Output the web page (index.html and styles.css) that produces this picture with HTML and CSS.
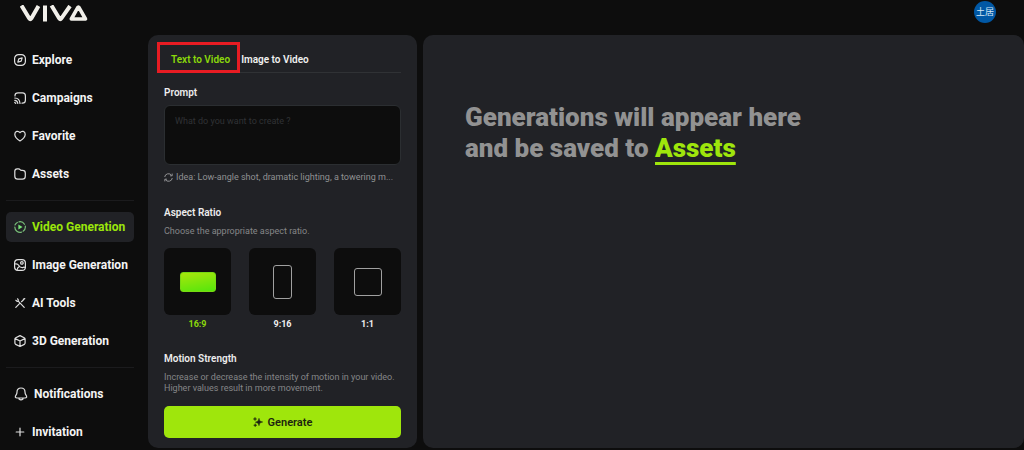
FILE: index.html
```html
<!DOCTYPE html>
<html lang="en">
<head>
<meta charset="utf-8">
<meta name="viewport" content="width=device-width, initial-scale=1">
<title>VIVA – Video Generation</title>
<link rel="stylesheet" href="styles.css">
</head>
<body>
<div class="app">
  <header class="topbar">
    <a class="logo" href="#" aria-label="VIVA">
      <svg width="68" height="17" viewBox="0 0 68 17" fill="none" stroke="#f1efe9" stroke-width="4" stroke-linejoin="round"><path d="M1.500 .5 9.300 13.500q1 1.500 2 0L18.500 1M25 .5v16M31.500 .5l7.800 13q1 1.500 2 0L50 1"/><path d="M57.600 2.800q.8-1.300 1.600 0L65.500 14H51.300Z" stroke-width="3.600"/></svg>
    </a>
    <button class="avatar" type="button">土居</button>
  </header>

  <nav class="sidebar" aria-label="Main">
    <a class="nav-item" href="#"><svg class="icon" viewBox="0 0 12 12"><rect x=".6" y=".6" width="10.800" height="10.800" rx="4"/><path d="m8.200 3.800-1 3.400-3.400 1 1-3.400Z"/></svg>Explore</a>
    <a class="nav-item" href="#"><svg class="icon" viewBox="0 0 12 12"><path d="M1 4V3.500Q1 .8 4 .8h4.500q2.900 0 2.900 2.900v4.500q0 3-3 3H8M.8 6q4.800.2 5.200 5.400M.8 8.300q2.600.2 3 3.100M.8 10.500l.9.900"/></svg>Campaigns</a>
    <a class="nav-item" href="#"><svg class="icon" viewBox="0 0 12 12"><path d="M6 11Q.8 7.800.8 4.200C.8 1.300 4.200.2 6 2.700 7.800.2 11.200 1.300 11.200 4.200Q11.200 7.800 6 11Z"/></svg>Favorite</a>
    <a class="nav-item" href="#"><svg class="icon" viewBox="0 0 12 12"><path d="M.8 3.300Q.8.8 3.200.8h1.300q1 0 1.600.9.500.7 1.400.7h1q2.800 0 2.800 2.600v3.300q0 2.900-2.900 2.900H3.700Q.8 11.200.8 8.300Z"/></svg>Assets</a>
    <hr class="divider">
    <a class="nav-item nav-item-active" href="#" aria-current="page"><svg class="icon" viewBox="0 0 12 12"><path d="M1 4A5.300 5.300 0 0 1 3.300 1.400M5 .8a5.300 5.300 0 0 1 5.500 2.500M11.300 5a5.300 5.300 0 0 1-2.200 5.200M7.500 11.100A5.300 5.300 0 0 1 .8 6"/><path class="solid" d="M4.400 3.500v5L8.500 6Z"/></svg>Video Generation</a>
    <a class="nav-item" href="#"><svg class="icon" viewBox="0 0 12 12"><rect x=".6" y=".6" width="10.800" height="10.800" rx="3.500"/><circle cx="7.900" cy="3.900" r="1.300"/><path d="M.8 5q2.600-.8 4 1.500T8.500 8.700q1.300-.9 2.800-.2M3 11Q3.400 8.600 5.300 7.500"/></svg>Image Generation</a>
    <a class="nav-item" href="#"><svg class="icon" viewBox="0 0 12 12"><path d="m4.200 4.200 6 6.200M1.800 10.400 6 6.200M7.500 4.700l2.800-2.600M1.900 3.300q1.200 1.300 2.300.9.600-1.200-.7-2.400M10.800 1.700l-1.300.3-.3 1.100"/></svg>AI Tools</a>
    <a class="nav-item" href="#"><svg class="icon" viewBox="0 0 12 12"><path d="m6 .6 4.200 2.100q.9.500.9 1.400v4q0 .9-.8 1.300L6 11.500 1.700 9.400Q.9 9 .9 8.100v-4q0-.9.900-1.400ZM1.200 3.600 6 6l4.800-2.400M6 6v5.300"/></svg>3D Generation</a>
    <hr class="divider">
    <a class="nav-item" href="#"><svg class="icon icon-large" viewBox="0 0 14 14"><path d="M7 1C4.500 1 3 2.800 3 5q0 1.800-1 3.200C.7 10.200 1.500 11 3 11h8c1.500 0 2.300-.8 1-2.800Q11 6.800 11 5C11 2.800 9.500 1 7 1ZM5 12q2 1.800 4 0"/></svg>Notifications</a>
    <a class="nav-item" href="#"><svg class="icon" viewBox="0 0 12 12"><path d="M6 2.200v7.600M2.200 6h7.600"/></svg>Invitation</a>
  </nav>

  <main class="workspace">
    <form class="panel controls">
      <div class="tabs" role="tablist">
        <button class="tab tab-active" type="button" role="tab" aria-selected="true">Text to Video</button>
        <button class="tab" type="button" role="tab" aria-selected="false">Image to Video</button>
      </div>

      <label class="heading" for="prompt">Prompt</label>
      <textarea class="prompt" id="prompt" placeholder="What do you want to create ?"></textarea>
      <button class="idea" type="button"><svg class="idea-icon" viewBox="0 0 9 9"><path d="M.7 4A3.800 3.800 0 0 1 7.700 2.500M8.200.6v2.200H6M8.300 5a3.800 3.800 0 0 1-7 1.500M.8 8.400V6.200H3"/></svg>Idea: Low-angle shot, dramatic lighting, a towering m...</button>

      <fieldset class="ratios">
        <legend class="heading">Aspect Ratio</legend>
        <p class="hint">Choose the appropriate aspect ratio.</p>
        <div class="ratio-list">
          <label class="ratio"><input class="ratio-input" type="radio" name="ratio" checked><span class="tile"><span class="shape shape-wide"></span></span><span class="ratio-name">16:9</span></label>
          <label class="ratio"><input class="ratio-input" type="radio" name="ratio"><span class="tile"><span class="shape shape-tall"></span></span><span class="ratio-name">9:16</span></label>
          <label class="ratio"><input class="ratio-input" type="radio" name="ratio"><span class="tile"><span class="shape shape-square"></span></span><span class="ratio-name">1:1</span></label>
        </div>
      </fieldset>

      <section class="motion">
        <h2 class="heading">Motion Strength</h2>
        <p class="hint">Increase or decrease the intensity of motion in your video.<br>Higher values result in more movement.</p>
      </section>
      <button class="generate" type="submit"><svg class="spark" viewBox="0 0 10 10"><path d="M6 1.200 6.900 4l2.900 1-2.900 1L6 8.800 5 6.300 2.300 5.200 5 4ZM2 .3l.5 1.200 1.200.5-1.200.5L2 3.700l-.5-1.200L.3 2l1.200-.5ZM2.200 6.600l.5 1.100 1.100.5-1.100.5-.5 1.100-.5-1.100-1.100-.5 1.100-.5Z" stroke="currentColor" stroke-width=".4"/></svg>Generate</button>
    </form>

    <section class="panel results">
      <p class="empty">Generations will appear here<br>and be saved to <a class="empty-link" href="#">Assets</a></p>
    </section>
  </main>
</div>
</body>
</html>
```

FILE: styles.css
```css
* {
  box-sizing: border-box;
}

body {
  margin: 0;
  background: #0d0d0d;
  color: #f0f0f0;
  font-family: Roboto, "Noto Sans CJK JP", sans-serif;
  font-size: 9px;
}

button,
textarea {
  margin: 0;
  border: 0;
  font: inherit;
}

button {
  padding: 0;
  background: none;
  color: inherit;
}

.app {
  display: grid;
  grid-template-columns: 148px 1fr;
  grid-template-rows: 35px 1fr;
  min-height: 100vh;
}

.topbar {
  grid-column: 1 / -1;
  display: flex;
  justify-content: space-between;
  align-items: flex-start;
  padding: 1px 28px 0 20px;
}

.logo {
  display: flex;
  padding-top: 4px;
}

.avatar {
  width: 22px;
  height: 22px;
  border-radius: 50%;
  background: #0158a5;
  color: #d8e8f5;
  line-height: 22px;
  text-align: center;
}

.sidebar {
  display: flex;
  flex-direction: column;
  gap: 8px;
  padding: 10px 14px 0 6px;
}

.nav-item {
  display: flex;
  align-items: center;
  gap: 6px;
  height: 30px;
  padding: 0 8px;
  border-radius: 5px;
  color: #f4f4f4;
  font-size: 12px;
  font-weight: 700;
  text-decoration: none;
  white-space: nowrap;
}

.nav-item-active {
  background: #212226;
  color: #9be60b;
}

.icon {
  flex: none;
  width: 12px;
  height: 12px;
  fill: none;
  stroke: #e0e0e0;
  stroke-width: 1.2;
  stroke-linecap: round;
  stroke-linejoin: round;
}

.icon-large {
  width: 14px;
  height: 14px;
}

.nav-item-active .icon {
  stroke: #78bd78;
}

.nav-item-active .solid {
  fill: #78e878;
  stroke: none;
}

.divider {
  width: 100%;
  height: 1px;
  margin: 3px 0;
  border: 0;
  background: #1b1b1d;
}

.workspace {
  display: grid;
  grid-template-columns: 269px 1fr;
  gap: 6px;
  padding-bottom: 2px;
}

.panel {
  border-radius: 10px;
  background: #212226;
}

.controls {
  display: flex;
  flex-direction: column;
  padding: 10px 16px;
}

.tabs {
  display: flex;
  gap: 11px;
  height: 28px;
  margin-bottom: 13px;
  padding-left: 7px;
  border-bottom: 1px solid #303235;
}

.tab {
  position: relative;
  padding-top: 1px;
  font-size: 10px;
  font-weight: 600;
  white-space: nowrap;
}

.tab-active {
  color: #8bd90b;
}

.tab-active::after {
  content: "";
  position: absolute;
  inset: -3px -10px -1px -14px;
  border: 3px solid #e81c23;
}

.heading {
  margin: 0;
  padding: 0;
  color: #ededed;
  font-size: 10px;
  font-weight: 600;
  line-height: 14px;
}

.prompt {
  height: 60px;
  margin-top: 5px;
  padding: 9px 10px;
  border: 1px solid #2b2e31;
  border-radius: 6px;
  background: #0d0d0d;
  color: #f0f0f0;
  line-height: 12px;
  resize: none;
}

.prompt::placeholder {
  color: #303235;
}

.idea {
  display: flex;
  align-items: center;
  gap: 3px;
  margin-top: 5px;
  color: #909193;
  line-height: 14px;
  white-space: nowrap;
}

.idea-icon {
  flex: none;
  width: 9px;
  height: 9px;
  fill: none;
  stroke: currentColor;
}

.ratios {
  min-width: 0;
  margin: 22px 0 0;
  padding: 0;
  border: 0;
}

.hint {
  margin: 6px 0 0;
  color: #858688;
  line-height: 11px;
}

.ratio-list {
  display: flex;
  justify-content: space-between;
  margin-top: 11px;
}

.ratio {
  display: flex;
  flex-direction: column;
  align-items: center;
  position: relative;
}

.ratio-input {
  position: absolute;
  opacity: 0;
}

.tile {
  display: flex;
  align-items: center;
  justify-content: center;
  width: 67px;
  height: 67px;
  border-radius: 6px;
  background: #0d0d0d;
}

.shape {
  border: 1px solid #a0a0a0;
  border-radius: 3px;
}

.shape-wide {
  width: 36px;
  height: 20px;
  border-color: #78d912;
  background: linear-gradient(170deg, #a8e60c, #55e60c);
}

.shape-tall {
  width: 19px;
  height: 34px;
}

.shape-square {
  width: 28px;
  height: 28px;
}

.ratio-name {
  margin-top: 2px;
  font-size: 9px;
  font-weight: 700;
  line-height: 14px;
}

.ratio-input:checked ~ .ratio-name {
  color: #8bd90b;
}

.motion {
  margin-top: 21px;
}

.generate {
  display: flex;
  align-items: center;
  justify-content: center;
  gap: 5px;
  height: 32px;
  margin-top: 12px;
  border-radius: 5px;
  background: #9fe60c;
  color: #1c2410;
  font-size: 11px;
  font-weight: 600;
}

.spark {
  width: 10px;
  height: 10px;
  fill: currentColor;
}

.results {
  padding: 67px 42px;
}

.empty {
  margin: 0;
  color: #929292;
  font-size: 26px;
  font-weight: 900;
  line-height: 31px;
}

.empty-link {
  color: #9fe60c;
  text-decoration: underline;
  text-decoration-thickness: 3px;
  text-underline-offset: 5px;
}
```
